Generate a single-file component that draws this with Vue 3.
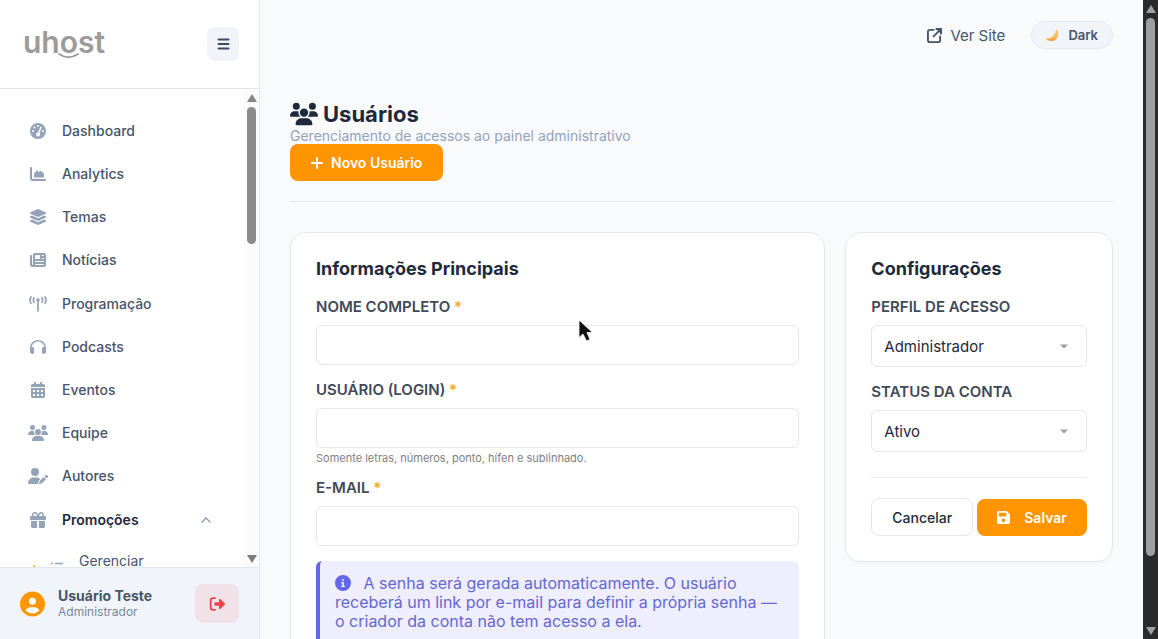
<script setup>
import { ref } from 'vue'

const groups = [
  [
    { label: 'Dashboard', icon: 'gauge' },
    { label: 'Analytics', icon: 'area' },
    { label: 'Temas', icon: 'layers' },
    { label: 'Notícias', icon: 'news' },
  ],
  [
    { label: 'Programação', icon: 'tower' },
    { label: 'Podcasts', icon: 'headphones' },
    { label: 'Eventos', icon: 'calendar' },
    { label: 'Equipe', icon: 'users' },
    { label: 'Autores', icon: 'userPen' },
  ],
]

const icons = {
  gauge: {
    box: '0 0 512 512',
    d: 'M256 0a256 256 0 1 0 0 512a256 256 0 1 0 0-512zM256 64a32 32 0 1 1 0 64a32 32 0 1 1 0-64zM144 112a32 32 0 1 1 0 64a32 32 0 1 1 0-64zM96 224a32 32 0 1 1 0 64a32 32 0 1 1 0-64zM416 224a32 32 0 1 1 0 64a32 32 0 1 1 0-64zM330 126c5-12 19-18 31-13s18 19 13 31l-74 178c12 12 20 28 20 46a64 64 0 1 1-64-64l74-178z',
  },
  area: {
    box: '0 0 512 512',
    d: 'M64 64c0-17.7-14.3-32-32-32S0 46.3 0 64L0 400c0 44.2 35.8 80 80 80l400 0c17.7 0 32-14.3 32-32s-14.3-32-32-32L80 416c-8.8 0-16-7.2-16-16L64 64zM128 336l0-84c0-8 3-15 8-21l72-81c12-13 32-13 44 0l34 38c6 6 16 6 22 0l22-22c13-13 34-12 46 2l64 77c5 6 8 13 8 21l0 70c0 18-14 32-32 32l-256 0c-18 0-32-14-32-32z',
  },
  layers: {
    box: '0 0 576 512',
    d: 'M264.5 5.2c14.9-6.9 32.1-6.9 47 0l218.6 101c8.5 3.9 13.9 12.4 13.9 21.8s-5.4 17.9-13.9 21.8l-218.6 101c-14.9 6.9-32.1 6.9-47 0L45.9 149.8C37.4 145.8 32 137.3 32 128s5.4-17.9 13.9-21.8L264.5 5.2zM476.9 209.6l53.2 24.6c8.5 3.9 13.9 12.4 13.9 21.8s-5.4 17.9-13.9 21.8l-218.6 101c-14.9 6.9-32.1 6.9-47 0L45.9 277.8C37.4 273.8 32 265.3 32 256s5.4-17.9 13.9-21.8l53.2-24.6 152 70.2c23.4 10.8 50.4 10.8 73.8 0l152-70.2zm-152 198.2l152-70.2 53.2 24.6c8.5 3.9 13.9 12.4 13.9 21.8s-5.4 17.9-13.9 21.8l-218.6 101c-14.9 6.9-32.1 6.9-47 0L45.9 405.8C37.4 401.8 32 393.3 32 384s5.4-17.9 13.9-21.8l53.2-24.6 152 70.2c23.4 10.8 50.4 10.8 73.8 0z',
  },
  news: {
    box: '0 0 512 512',
    d: 'M96 96c0-35.3 28.7-64 64-64l288 0c35.3 0 64 28.7 64 64l0 320c0 35.3-28.7 64-64 64L80 480c-44.2 0-80-35.8-80-80L0 128c0-17.7 14.3-32 32-32s32 14.3 32 32l0 272c0 8.8 7.2 16 16 16s16-7.2 16-16L96 96zM160 120l0 80c0 13.3 10.7 24 24 24l112 0c13.3 0 24-10.7 24-24l0-80c0-13.3-10.7-24-24-24L184 96c-13.3 0-24 10.7-24 24zM384 96c-21 0-21 32 0 32l48 0c21 0 21-32 0-32zM384 192c-21 0-21 32 0 32l48 0c21 0 21-32 0-32zM176 288c-21 0-21 32 0 32l256 0c21 0 21-32 0-32zM176 384c-21 0-21 32 0 32l256 0c21 0 21-32 0-32z',
  },
  headphones: {
    box: '0 0 512 512',
    d: 'M256 80C149.9 80 62.4 159.4 49.6 262c9.4-3.8 19.6-6 30.4-6c26.5 0 48 21.5 48 48l0 128c0 26.5-21.5 48-48 48c-44.2 0-80-35.8-80-80l0-112C0 146.6 114.6 32 256 32s256 114.6 256 256l0 112c0 44.2-35.8 80-80 80c-26.5 0-48-21.5-48-48l0-128c0-26.5 21.5-48 48-48c10.8 0 21 2.1 30.4 6C449.6 159.4 362.1 80 256 80z',
  },
  calendar: {
    box: '0 0 448 512',
    d: 'M96 32l0 32L48 64C21.5 64 0 85.5 0 112l0 48 448 0 0-48c0-26.5-21.5-48-48-48l-48 0 0-32c0-42-64-42-64 0l0 32-128 0 0-32c0-42-64-42-64 0zM0 192l0 272c0 26.5 21.5 48 48 48l352 0c26.5 0 48-21.5 48-48l0-272zM64 256l64 0 0 64-64 0zM192 256l64 0 0 64-64 0zM320 256l64 0 0 64-64 0zM64 384l64 0 0 64-64 0zM192 384l64 0 0 64-64 0zM320 384l64 0 0 64-64 0z',
  },
  users: {
    box: '0 0 640 512',
    d: 'M144 0a80 80 0 1 1 0 160A80 80 0 1 1 144 0zM512 0a80 80 0 1 1 0 160A80 80 0 1 1 512 0zM0 298.7C0 239.8 47.8 192 106.7 192l42.7 0c15.9 0 31 3.5 44.6 9.7c-1.3 7.2-1.9 14.7-1.9 22.3c0 38.2 16.8 72.5 43.3 96L21.3 320C9.6 320 0 310.4 0 298.7zM405.3 320c26-23.5 42.7-57.8 42.7-96c0-7.6-.7-15-1.9-22.3c13.6-6.3 28.7-9.7 44.6-9.7l42.7 0C592.2 192 640 239.8 640 298.7c0 11.8-9.6 21.3-21.3 21.3zM224 224a96 96 0 1 1 192 0a96 96 0 1 1-192 0zM128 485.3C128 411.7 187.7 352 261.3 352l117.3 0C452.3 352 512 411.7 512 485.3c0 14.7-11.9 26.7-26.7 26.7l-330.7 0c-14.7 0-26.7-11.9-26.7-26.7z',
  },
  userPen: {
    box: '0 0 640 512',
    d: 'M224 256A128 128 0 1 0 224 0a128 128 0 1 0 0 256zm-45.7 48C79.8 304 0 383.8 0 482.3C0 498.7 13.3 512 29.7 512l293.1 0c-3.1-8.8-3.7-18.4-1.4-27.8l15-60.1c2.8-11.3 8.6-21.5 16.8-29.7l40.3-40.3c-32.1-31-75.7-50.1-123.9-50.1l-91.4 0zm435.5-68.3c-15.6-15.6-40.9-15.6-56.6 0l-29.4 29.4 71 71 29.4-29.4c15.6-15.6 15.6-40.9 0-56.6l-14.4-14.4zM375.9 417c-4.1 4.1-7 9.2-8.4 14.9l-15 60.1c-1.4 5.5 .2 11.2 4.2 15.2s9.7 5.6 15.2 4.2l60.1-15c5.6-1.4 10.8-4.3 14.9-8.4L576.1 358.7l-71-71L375.9 417z',
  },
}

const login = ref('')
const fullName = ref('')
const email = ref('')
const role = ref('Administrador')
const status = ref('Ativo')
</script>

<template>
  <div class="shell">
    <aside class="sidebar">
      <div class="brand">
        <svg class="logo" viewBox="0 0 90 40" role="img" aria-label="uhost">
          <text x="-1" y="29" class="logo-text">uhost</text>
          <path d="M34 29.5Q44.500 36.500 55 29.5" fill="none" stroke="#fff" stroke-width="4" />
          <path d="M35 30Q44.500 36.500 54 30" fill="none" stroke="#9b9b9b" stroke-width="1.8" stroke-linecap="round" />
        </svg>
        <button class="toggle" type="button" aria-label="Menu">
          <svg viewBox="0 0 12 12"><path d="M1 1.5H11M1 6H11M1 10.5H11" stroke="#3c4a5e" stroke-width="1.9" stroke-linecap="round" /></svg>
        </button>
      </div>

      <div class="nav-area">
        <nav class="nav">
          <ul v-for="(group, i) in groups" :key="i">
            <li v-for="item in group" :key="item.label">
              <a href="#">
                <span class="ico">
                  <svg v-if="item.icon === 'tower'" viewBox="0 0 18 16" fill="none" stroke="currentColor" stroke-width="1.7" stroke-linecap="round">
                    <path d="M2 1Q0 4.200 2 7.400M16 1Q18 4.200 16 7.400M5 2Q3.800 4.200 5 6.400M13 2Q14.200 4.200 13 6.400M9 5V15" />
                    <circle cx="9" cy="4" r="1.8" fill="currentColor" stroke="none" />
                  </svg>
                  <svg v-else :viewBox="icons[item.icon].box" fill="currentColor" fill-rule="evenodd"><path :d="icons[item.icon].d" /></svg>
                </span>
                {{ item.label }}
              </a>
            </li>
          </ul>
          <ul>
            <li>
              <a href="#" class="open">
                <span class="ico">
                  <svg viewBox="0 0 512 512" fill="currentColor"><path d="M190.5 68.8L225.3 128l-73.3 0c-22.1 0-40-17.9-40-40s17.9-40 40-40l2.2 0c14.9 0 28.8 7.9 36.3 20.8zM64 88c0 14.4 3.5 28 9.6 40L32 128c-17.7 0-32 14.3-32 32l0 64c0 17.7 14.3 32 32 32l448 0c17.7 0 32-14.3 32-32l0-64c0-17.7-14.3-32-32-32l-41.6 0c6.1-12 9.6-25.6 9.6-40c0-48.6-39.4-88-88-88l-2.2 0c-31.9 0-61.5 16.9-77.7 44.4L256 85.5l-24.1-41C215.7 16.9 186.1 0 154.2 0L152 0C103.4 0 64 39.4 64 88zm336 0c0 22.1-17.9 40-40 40l-73.3 0 34.8-59.2C329.1 55.9 342.9 48 357.8 48l2.2 0c22.1 0 40 17.9 40 40zM32 288l0 176c0 26.5 21.5 48 48 48l144 0 0-224L32 288zM288 512l144 0c26.5 0 48-21.5 48-48l0-176-192 0 0 224z" /></svg>
                </span>
                Promoções
                <svg class="caret" viewBox="0 0 10 6" fill="none" stroke="#8c98a8" stroke-width="1.4" stroke-linecap="round"><path d="M1 5L5 1L9 5" /></svg>
              </a>
              <a href="#" class="sub">
                <svg class="sub-ico" viewBox="0 0 32 20">
                  <path d="M1 6.500L7 11L1 16Z" fill="#f5b731" />
                  <path d="M19 5.500H21M23 5.500H31" stroke="#94a3b8" stroke-width="1.500" />
                </svg>
                Gerenciar
              </a>
            </li>
          </ul>
        </nav>
        <div class="side-scroll" aria-hidden="true">
          <svg viewBox="0 0 10 8"><path d="M5 0L10 8H0Z" fill="#858585" /></svg>
          <div class="side-track"><div class="side-thumb"></div></div>
          <svg viewBox="0 0 10 8"><path d="M5 8L10 0H0Z" fill="#7c7c7c" /></svg>
        </div>
      </div>

      <div class="account">
        <svg class="avatar" viewBox="0 0 512 512"><circle cx="256" cy="256" r="240" fill="#fff" /><path fill="#ff9501" fill-rule="evenodd" d="M399 384.2C376.9 345.8 335.4 320 288 320l-64 0c-47.4 0-88.9 25.800-111 64.200c35.200 39.200 86.200 63.800 143 63.800s107.800-24.700 143-63.800zM0 256a256 256 0 1 1 512 0A256 256 0 1 1 0 256zm256 16a72 72 0 1 0 0-144 72 72 0 1 0 0 144z" /></svg>
        <div class="who">
          <strong>Usuário Teste</strong>
          <span>Administrador</span>
        </div>
        <button class="logout" type="button" aria-label="Sair">
          <svg viewBox="0 0 16 14"><path d="M5.5 1.2H3.5Q1.2 1.2 1.2 3.5V10.5Q1.2 12.8 3.5 12.8H5.5" fill="none" stroke="#f03e4a" stroke-width="1.8" stroke-linecap="round" /><path d="M5.8 5.2H9.5V2.5Q9.7 1.5 10.6 2.1L15.4 6.4Q16 7 15.4 7.6L10.6 11.9Q9.7 12.5 9.5 11.5V8.8H5.8Q5 8.8 5 8V6Q5 5.2 5.8 5.2Z" fill="#f03e4a" /></svg>
        </button>
      </div>
    </aside>

    <main class="main">
      <div class="topbar">
        <a href="#" class="site">
          <svg viewBox="0 0 16 16" fill="none" stroke="currentColor" stroke-width="2" stroke-linecap="round" stroke-linejoin="round"><path d="M7 2H3Q1 2 1 4V13Q1 15 3 15H12Q14 15 14 13V9M10 1H15V6M15 1L7 9" /><path d="M11 1H15V5Z" fill="currentColor" /></svg>
          Ver Site
        </a>
        <button class="theme" type="button">
          <svg viewBox="0 0 14 14"><path d="M11.2 .8Q13.8 4 13 8Q11 12.8 6 13.2Q2.5 13 .8 10.2Q5 11 8 8Q11 5 11.2 .8Z" fill="#fbc062" /><path d="M13 8Q11 12.8 6 13.2Q2.5 13 .8 10.2Q4 12 8 10.5Q11 9.5 13 8Z" fill="#f5a34a" /></svg>
          Dark
        </button>
      </div>

      <header class="page-head">
        <h1>
          <svg :viewBox="icons.users.box" fill="currentColor"><path :d="icons.users.d" /></svg>
          Usuários
        </h1>
        <p>Gerenciamento de acessos ao painel administrativo</p>
        <button class="primary new" type="button">
          <svg viewBox="0 0 12 12"><path d="M6 1V11M1 6H11" stroke="#fff" stroke-width="2" stroke-linecap="round" /></svg>
          Novo Usuário
        </button>
      </header>

      <form class="columns" @submit.prevent>
        <section class="card">
          <h2>Informações Principais</h2>
          <label for="name">Nome completo <i>*</i></label>
          <input id="name" v-model="fullName" type="text" />
          <label for="login">Usuário (login) <i>*</i></label>
          <input id="login" v-model="login" type="text" />
          <small>Somente letras, números, ponto, hífen e sublinhado.</small>
          <label for="email">E-mail <i>*</i></label>
          <input id="email" v-model="email" type="email" />
          <p class="notice">
            <svg viewBox="0 0 512 512"><path fill="#6366e8" d="M256 512A256 256 0 1 0 256 0a256 256 0 1 0 0 512zM216 336l24 0 0-64-24 0c-13.3 0-24-10.7-24-24s10.7-24 24-24l48 0c13.3 0 24 10.7 24 24l0 88 8 0c13.3 0 24 10.7 24 24s-10.7 24-24 24l-80 0c-13.3 0-24-10.7-24-24s10.7-24 24-24zm40-208a32 32 0 1 1 0 64 32 32 0 1 1 0-64z" /></svg>
            A senha será gerada automaticamente. O usuário receberá um link por e-mail para definir a própria senha — o criador da conta não tem acesso a ela.
          </p>
        </section>

        <section class="card">
          <h2>Configurações</h2>
          <label for="role">Perfil de acesso</label>
          <div class="select">
            <select id="role" v-model="role"><option>Administrador</option></select>
            <svg viewBox="0 0 8 5"><path d="M0 .5H8L4 4.5Z" fill="#9a9a9a" /></svg>
          </div>
          <label for="status">Status da conta</label>
          <div class="select">
            <select id="status" v-model="status"><option>Ativo</option></select>
            <svg viewBox="0 0 8 5"><path d="M0 .5H8L4 4.5Z" fill="#9a9a9a" /></svg>
          </div>
          <div class="actions">
            <button class="cancel" type="button">Cancelar</button>
            <button class="primary save" type="submit">
              <svg viewBox="0 32 448 448" fill="#fff"><path fill-rule="evenodd" d="M64 32C28.7 32 0 60.7 0 96L0 416c0 35.3 28.7 64 64 64l320 0c35.3 0 64-28.7 64-64l0-242.7c0-17-6.7-33.3-18.7-45.3L352 50.7C340 38.7 323.7 32 306.7 32L64 32zm0 96c0-17.7 14.3-32 32-32l192 0c17.7 0 32 14.3 32 32l0 64c0 17.7-14.3 32-32 32L96 224c-17.7 0-32-14.3-32-32l0-64zM224 288a64 64 0 1 1 0 128 64 64 0 1 1 0-128z" /></svg>
              Salvar
            </button>
          </div>
        </section>
      </form>
    </main>

    <div class="page-scroll" aria-hidden="true">
      <svg viewBox="0 0 10 8"><path d="M5 0L10 8H0Z" fill="#a0a0a0" /></svg>
      <div class="page-track"><div class="page-thumb"></div></div>
      <svg viewBox="0 0 10 8"><path d="M5 8L10 0H0Z" fill="#a0a0a0" /></svg>
    </div>

    <svg class="pointer" viewBox="0 0 16 24" aria-hidden="true"><path d="M1 1V18.5L5 15L8.5 22L12 20.5L9 13.5H14.5Z" fill="#111" stroke="#fff" stroke-width=".8" /></svg>
  </div>
</template>

<style>
html,
body {
  margin: 0;
  overflow: hidden;
}
</style>

<style scoped>
* {
  box-sizing: border-box;
}
.shell {
  position: relative;
  display: grid;
  grid-template-columns: 260px minmax(0, 1fr) 15px;
  grid-template-rows: minmax(0, 1fr);
  height: 100vh;
  overflow: hidden;
  background: #f8fafc;
  color: #1e293b;
  font-family: Inter, "Liberation Sans", sans-serif;
  font-size: 15px;
}
button,
input,
select {
  font: inherit;
  color: inherit;
}
a {
  color: inherit;
  text-decoration: none;
}
svg {
  display: block;
  flex: none;
}
h1,
h2,
p,
ul {
  margin: 0;
  padding: 0;
}
ul {
  list-style: none;
}

/* Sidebar */
.sidebar {
  display: flex;
  flex-direction: column;
  min-height: 0;
  background: #fff;
  border-right: 1px solid #e4e8ee;
}
.brand {
  flex: none;
  display: flex;
  align-items: center;
  justify-content: space-between;
  height: 89px;
  padding: 0 20px 0 24px;
  border-bottom: 1px solid #e2e6eb;
}
.logo {
  width: 90px;
  height: 40px;
}
.logo-text {
  font-weight: 600;
  font-size: 30px;
  fill: #9b9b9b;
}
.toggle {
  display: grid;
  place-items: center;
  width: 32px;
  height: 34px;
  padding: 0;
  border: 0;
  border-radius: 8px;
  background: #f0f4f9;
}
.toggle svg {
  width: 13px;
  height: 12px;
}
.nav-area {
  flex: 1;
  display: flex;
  min-height: 0;
}
.nav {
  flex: 1;
  display: flex;
  flex-direction: column;
  gap: 1px;
  min-width: 0;
  padding-top: 20px;
  overflow: hidden;
  color: #475569;
  font-size: 14px;
  font-weight: 500;
}
.nav ul {
  flex: none;
}
.nav a {
  display: flex;
  align-items: center;
  gap: 14px;
  height: 43px;
  padding: 0 33px 0 28px;
}
.ico {
  display: grid;
  place-items: center;
  width: 20px;
  color: #94a3b8;
}
.ico svg {
  height: 16px;
}
.nav a.open {
  color: #1e293b;
  font-weight: 600;
}
.caret {
  width: 10px;
  height: 6px;
  margin-left: auto;
}
.nav a.sub {
  height: 38px;
  gap: 15px;
  padding: 0 0 0 32px;
  font-weight: 400;
}
.sub-ico {
  width: 32px;
  height: 20px;
  margin-top: 15px;
}
.side-scroll {
  flex: none;
  display: flex;
  flex-direction: column;
  align-items: center;
  gap: 5px;
  width: 15px;
  padding: 5px 0 4px;
  background: #fbfbfc;
}
.side-scroll svg {
  width: 10px;
  height: 8px;
}
.side-track {
  flex: 1;
  width: 9px;
}
.side-thumb {
  height: 31%;
  border-radius: 5px;
  background: #8b8b8b;
}
.account {
  flex: none;
  display: flex;
  align-items: center;
  height: 72px;
  padding: 0 20px;
  border-top: 1px solid #e2e8f0;
  background: #f1f5f9;
}
.avatar {
  width: 25px;
  height: 26px;
}
.who {
  flex: 1;
  margin-left: 13px;
  color: #475569;
  line-height: 16px;
}
.who strong,
.who span {
  display: block;
}
.who strong {
  font-weight: 700;
  font-size: 14px;
}
.who span {
  color: #7b8799;
  font-size: 12px;
}
.logout {
  display: grid;
  place-items: center;
  width: 44px;
  height: 39px;
  padding: 0;
  border: 0;
  border-radius: 8px;
  background: #f1e1e9;
}
.logout svg {
  width: 17px;
  height: 14px;
}

/* Main column */
.main {
  min-width: 0;
  padding: 21px 30px 0;
  overflow: hidden;
}
.topbar {
  display: flex;
  align-items: center;
  justify-content: flex-end;
  gap: 26px;
}
.site {
  display: flex;
  align-items: center;
  gap: 8px;
  color: #475569;
}
.site svg {
  width: 15px;
  height: 15px;
}
.theme {
  display: flex;
  align-items: center;
  gap: 9px;
  height: 28px;
  padding: 0 14px 0 13px;
  border: 1px solid #e5eaf1;
  border-radius: 14px;
  background: #f1f5f9;
  color: #475569;
  font-weight: 600;
  font-size: 13px;
}
.theme svg {
  width: 14px;
  height: 14px;
}
.page-head {
  margin-top: 51px;
  padding-bottom: 20px;
  border-bottom: 1px solid #e6eaef;
}
h1 {
  display: flex;
  align-items: center;
  gap: 5px;
  font-size: 22px;
  line-height: 28px;
  font-weight: 700;
}
h1 svg {
  width: 28px;
  height: 24px;
}
.page-head p {
  color: #94a3b8;
  font-size: 14px;
  line-height: 16px;
}
.primary {
  display: inline-flex;
  align-items: center;
  justify-content: center;
  height: 37px;
  border: 0;
  border-radius: 8px;
  background: #ff9501;
  color: #fff;
  font-weight: 600;
  font-size: 14px;
}
.new {
  display: flex;
  gap: 8px;
  padding: 0 21px;
}
.new svg {
  width: 12px;
  height: 12px;
}
.columns {
  display: grid;
  grid-template-columns: minmax(0, 2fr) minmax(0, 1fr);
  align-items: start;
  gap: 20px;
  margin-top: 30px;
}
.card {
  padding: 25px;
  border: 1px solid #e6eaef;
  border-radius: 16px;
  background: #fff;
  box-shadow: 0 1px 3px rgba(15, 23, 42, 0.04);
}
h2 {
  margin-bottom: 17px;
  font-size: 18px;
  line-height: 22px;
  font-weight: 700;
}
label {
  display: block;
  margin: 15px 0 8px;
  color: #3f4957;
  font-size: 15px;
  line-height: 20px;
  font-weight: 600;
  text-transform: uppercase;
}
label i {
  color: #f5a623;
  font-style: normal;
}
input {
  display: block;
  width: 100%;
  height: 40px;
  padding: 0 12px;
  border: 1px solid #e3e6ea;
  border-radius: 6px;
  background: #fff;
}
small {
  display: block;
  margin-top: 2px;
  margin-bottom: -3px;
  color: #808080;
  font-size: 11px;
  line-height: 16px;
}
.notice {
  margin-top: 15px;
  padding: 13px 15px;
  border-left: 4px solid #6366e8;
  border-radius: 6px;
  background: #efeefd;
  color: #6668d0;
  font-size: 16px;
  line-height: 19px;
}
.notice svg {
  display: inline-block;
  width: 16px;
  height: 16px;
  margin-right: 8px;
  vertical-align: -2px;
}
.select {
  position: relative;
}
.select select {
  display: block;
  width: 100%;
  height: 42px;
  padding: 0 12px;
  border: 1px solid #e3e6ea;
  border-radius: 6px;
  background: #fff;
  appearance: none;
}
.select svg {
  position: absolute;
  top: 19px;
  right: 19px;
  width: 8px;
  height: 5px;
  pointer-events: none;
}
.actions {
  display: flex;
  align-items: center;
  gap: 4px;
  margin-top: 25px;
  padding-top: 20px;
  border-top: 1px solid #e9ecf0;
}
.cancel {
  height: 38px;
  padding: 0 20px;
  border: 1px solid #e3e7ec;
  border-radius: 8px;
  background: #fff;
  font-weight: 500;
  font-size: 14px;
}
.save {
  flex: 1;
  gap: 14px;
  padding: 0;
}
.save svg {
  width: 13px;
  height: 13px;
}

/* Page scrollbar */
.page-scroll {
  display: flex;
  flex-direction: column;
  align-items: center;
  gap: 5px;
  padding: 5px 0 4px;
  background: #2b2b2b;
}
.page-scroll svg {
  width: 10px;
  height: 8px;
}
.page-track {
  flex: 1;
  width: 9px;
}
.page-thumb {
  height: 89%;
  border-radius: 5px;
  background: #9f9f9f;
}
.pointer {
  position: absolute;
  left: 578px;
  top: 319px;
  width: 16px;
  height: 24px;
}
</style>
